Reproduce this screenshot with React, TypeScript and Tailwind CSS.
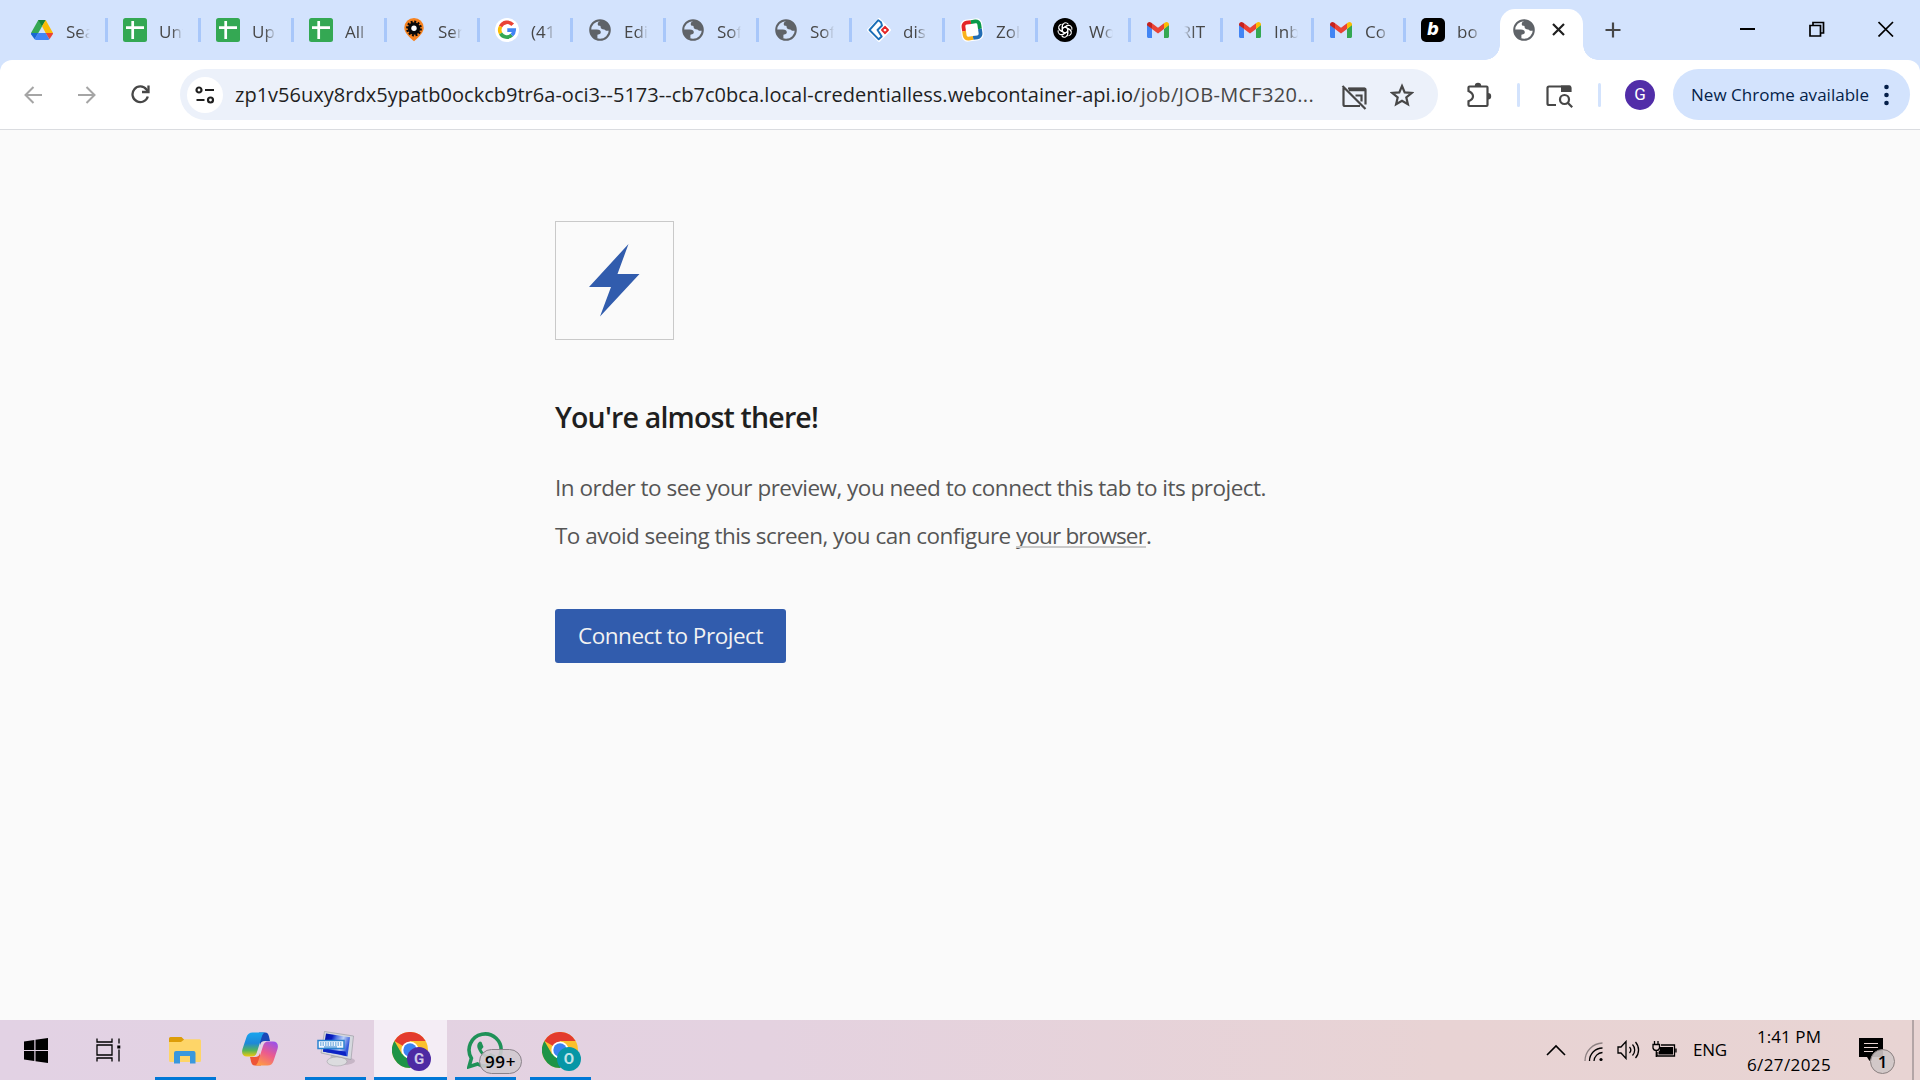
import React, { useLayoutEffect, useRef, useState } from "react";

/* Spreads a single line of text over a given width by adjusting its tracking. */
function Fit({ w, className = "", children }: { w: number; className?: string; children: React.ReactNode }) {
  const ref = useRef<HTMLSpanElement>(null);
  const [sp, setSp] = useState(0);
  useLayoutEffect(() => {
    const el = ref.current;
    if (!el) return;
    el.style.letterSpacing = "0px";
    const n = (el.textContent || "").length;
    const v = (w - el.getBoundingClientRect().width) / Math.max(1, n);
    el.style.letterSpacing = v + "px";
    setSp(v);
  }, [w]);
  return (
    <span ref={ref} className={"inline-block whitespace-nowrap " + className} style={{ letterSpacing: sp }}>
      {children}
    </span>
  );
}

const Drive = () => (
  <svg width="24" height="24" viewBox="0 0 24 24">
    <path d="M8.3 2h7.4L8.3 15H1z" fill="#34a853" />
    <path d="M8.3 2h7.4l-3.7 6.3z" fill="#188038" />
    <path d="M15.7 2L23 15h-7.3L12 8.3z" fill="#fbbc04" />
    <path d="M8.3 15h7.5l3.7 6.2c-.4.5-.9.8-1.6.8H6.200c-.7 0-1.200-.3-1.600-.8z" fill="#4285f4" />
    <path d="M1 15h7.300l-3.700 6.200L1.200 16.500z" fill="#1967d2" />
    <path d="M15.700 15H23c0 .6-.1 1-.4 1.500l-3.100 4.700z" fill="#ea4335" />
  </svg>
);
const Sheet = () => (
  <svg width="24" height="24" viewBox="0 0 24 24">
    <rect width="24" height="24" rx="2.500" fill="#34a853" />
    <path d="M3 9.700h18M9.700 3v18" stroke="#fff" strokeWidth="2.700" />
  </svg>
);
const Pin = () => (
  <svg width="24" height="24" viewBox="0 0 24 24">
    <path d="M12 0a9.700 9.700 0 0 1 9.700 9.700c0 4.500-4 8.500-9.700 13.600C6.300 18.200 2.300 14.200 2.300 9.700A9.700 9.700 0 0 1 12 0z" fill="#f58220" />
    <circle cx="12" cy="10.500" r="6.200" fill="#0a0a0a" />
    <circle cx="12" cy="10.500" r="6.800" fill="none" stroke="#0a0a0a" strokeWidth="2.200" strokeDasharray="2 1.560" />
    <circle cx="12" cy="10.300" r="2.700" fill="#fff" />
  </svg>
);
const Google = () => (
  <svg width="24" height="24" viewBox="0 0 24 24">
    <circle cx="12" cy="12" r="12" fill="#fff" />
    <g fill="none" strokeWidth="3.600">
      <path d="M17.700 6.800A7.300 7.300 0 0 0 5.600 8.500" stroke="#ea4335" />
      <path d="M5.600 8.500a7.300 7.300 0 0 0 0 7" stroke="#fbbc05" />
      <path d="M5.600 15.500a7.300 7.300 0 0 0 11.200 1.700" stroke="#34a853" />
      <path d="M16.800 17.200a7.300 7.300 0 0 0 2.400-5.100H12.300" stroke="#4285f4" />
    </g>
  </svg>
);
const Globe = () => (
  <svg width="24" height="24" viewBox="0 0 24 24">
    <circle cx="12" cy="12" r="9.800" fill="none" stroke="#5f6368" strokeWidth="2" />
    <path d="M2.500 11.500h6.300c2.700 0 4 .9 4 2.800 0 1.500-1 2.100-2.800 2.100-.4 0-.6.3-.6.700V21C5 20 2.300 16.500 2.500 11.500zM14 2.600c-1.800.2-4.300 1.300-4.300 3.300 0 1.300.8 1.900 2.200 1.900.5 0 .7.400.7.900 0 2 1.300 2.700 3.500 2.700 1.100 0 1.400 1.400 2.700 1.400h2.800C22 7.500 19 3.500 14 2.600z" fill="#5f6368" />
  </svg>
);
const ZohoDesk = () => (
  <svg width="24" height="24" viewBox="0 0 24 24">
    <path d="M12 .5L23.500 12 12 23.500.5 12z" fill="#fff" stroke="#fff" strokeWidth="1.500" strokeLinejoin="round" />
    <path d="M14 4.200L11.300 2.200 2.500 12l9.200 9.300 3-2.800-4.200-6.500 4.500-4.500z" fill="none" stroke="#1b6fb8" strokeWidth="1.900" strokeLinejoin="round" />
    <path d="M18 8.800l3 3.200-3 3.200-3-3.200z" fill="none" stroke="#e42527" strokeWidth="1.900" strokeLinejoin="round" />
  </svg>
);
const Zoho = () => (
  <svg width="24" height="24" viewBox="0 0 24 24">
    <rect x="1" y="1" width="22" height="22" rx="6" fill="#fff" transform="rotate(-8 12 12)" />
    <g transform="rotate(-8 12 12)" fill="none" strokeWidth="3.800">
      <path d="M4 12V7.500A3.500 3.500 0 0 1 7.500 4H12" stroke="#e42527" />
      <path d="M12 4h4.500A3.500 3.500 0 0 1 20 7.500V12" stroke="#089949" />
      <path d="M20 12v4.500a3.500 3.500 0 0 1-3.500 3.500H12" stroke="#226db4" />
      <path d="M12 20H7.500A3.500 3.500 0 0 1 4 16.500V12" stroke="#f9b21d" />
    </g>
  </svg>
);
const Gpt = () => (
  <svg width="24" height="24" viewBox="0 0 24 24">
    <circle cx="12" cy="12" r="12" fill="#000" />
    <g fill="none" stroke="#fff" strokeWidth="1.100">
      {[0, 60, 120, 180, 240, 300].map((a) => (
        <path key={a} transform={`rotate(${a} 12 12)`} d="M9.300 13.400V8.200a3.300 3.300 0 0 1 5.900-2.100M9.300 10.400l4.500-2.600a3.300 3.300 0 0 1 2.600-.3" />
      ))}
    </g>
  </svg>
);
const Gmail = () => (
  <svg width="24" height="24" viewBox="0 0 24 24">
    <path d="M1 6v12.500c0 .8.700 1.500 1.500 1.500H6v-9z" fill="#4285f4" />
    <path d="M23 6v12.500c0 .8-.7 1.500-1.500 1.500H18v-9z" fill="#34a853" />
    <path d="M6 11V5.200l6 4.500 6-4.500V11l-6 4.500z" fill="#ea4335" />
    <path d="M1 6.500C1 4 3.500 3.300 5 4.400l1 .8V11L1 7.300z" fill="#c5221f" />
    <path d="M23 6.500c0-2.500-2.500-3.200-4-2.100l-1 .8V11l5-3.700z" fill="#fbbc04" />
  </svg>
);
const Bolt = () => (
  <span className="flex size-6 items-center justify-center rounded-[5px] bg-black pb-0.5 font-['Inter'] text-[18px] leading-none font-extrabold text-white italic">
    b
  </span>
);

const tabs: { icon: React.ReactNode; t: string; w: string; left?: boolean }[] = [
  { icon: <Drive />, t: "Sea", w: "w-[93px]" },
  { icon: <Sheet />, t: "Unt", w: "w-[93px]" },
  { icon: <Sheet />, t: "Up", w: "w-[93px]" },
  { icon: <Sheet />, t: "All", w: "w-[93px]" },
  { icon: <Pin />, t: "Ser", w: "w-[93px]" },
  { icon: <Google />, t: "(41", w: "w-[93px]" },
  { icon: <Globe />, t: "Edit", w: "w-[93px]" },
  { icon: <Globe />, t: "Sof", w: "w-[93px]" },
  { icon: <Globe />, t: "Sof", w: "w-[93px]" },
  { icon: <ZohoDesk />, t: "dis", w: "w-[93px]" },
  { icon: <Zoho />, t: "Zoh", w: "w-[93px]" },
  { icon: <Gpt />, t: "Wo", w: "w-[93px]" },
  { icon: <Gmail />, t: "RIT", w: "w-[92px]", left: true },
  { icon: <Gmail />, t: "Inb", w: "w-[91px]" },
  { icon: <Gmail />, t: "Co", w: "w-[92px]" },
  { icon: <Bolt />, t: "bo", w: "w-[94px]" },
];

function TabStrip() {
  return (
    <div className="flex h-[60px] items-start bg-[#d3e3fd] pl-[15px]">
      {tabs.map((x, i) => (
        <div key={i} className={"mt-[18px] flex h-6 shrink-0 items-center pl-[15px] " + x.w}>
          <div className="size-6 shrink-0">{x.icon}</div>
          <div
            className={
              "flex h-7 items-center overflow-hidden pt-1 whitespace-nowrap text-[#474747] " +
              (x.left
                ? "ml-[14px] w-[21px] justify-end text-[17px] [mask-image:linear-gradient(to_left,black_50%,transparent)]"
                : "ml-3 w-6 text-[17px] [mask-image:linear-gradient(to_right,black_55%,transparent)]")
            }
          >
            {x.t}
          </div>
          {i < 15 && <div className="ml-auto h-6 w-[3px] bg-[#a8c7fa]" />}
        </div>
      ))}
      <div className="relative mt-[9px] flex h-[51px] w-[83px] shrink-0 items-start rounded-t-[15px] bg-white pt-[9px] pl-3">
        <Globe />
        <svg className="mt-1 ml-[15px]" width="16" height="16" viewBox="0 0 16 16">
          <path d="M2 2l11 11M13 2L2 13" stroke="#1f1f1f" strokeWidth="2.200" />
        </svg>
        <div className="absolute bottom-0 -left-[15px] size-[15px] bg-[radial-gradient(circle_at_0_0,transparent_14.500px,white_15px)]" />
        <div className="absolute -right-[15px] bottom-0 size-[15px] bg-[radial-gradient(circle_at_100%_0,transparent_14.500px,white_15px)]" />
      </div>
      <svg className="mt-[22px] ml-[22px]" width="16" height="16" viewBox="0 0 16 16">
        <path d="M8 .500v15M.500 8h15" stroke="#474747" strokeWidth="2.200" />
      </svg>
      <div className="mt-[21px] mr-[26px] ml-auto flex items-center gap-[53px]">
        <svg width="16" height="16" viewBox="0 0 16 16"><path d="M0 8h15" stroke="#000" strokeWidth="2" /></svg>
        <svg width="16" height="16" viewBox="0 0 16 16">
          <path d="M1 4.500h10.500V15H1zM4 4.500V1.500h10.500V12h-3" fill="none" stroke="#000" strokeWidth="1.700" />
        </svg>
        <svg width="16" height="16" viewBox="0 0 16 16"><path d="M.500 1l14.500 14.500M15 1L.500 15.500" stroke="#000" strokeWidth="1.700" /></svg>
      </div>
    </div>
  );
}

function Toolbar() {
  return (
    <div className="bg-[#d3e3fd]">
      <div className="flex h-[70px] items-start rounded-t-[12px] border-b border-[#dadce0] bg-white pt-[9px] text-[#474747]">
        <div className="flex h-[51px] w-[180px] shrink-0 items-center pl-[24px]">
          <svg width="18" height="18" viewBox="0 0 18 18"><path d="M18 9H2M9.500 1L1.500 9l8 8" fill="none" stroke="#a5a5a5" strokeWidth="2" /></svg>
          <svg className="ml-9" width="18" height="18" viewBox="0 0 18 18"><path d="M0 9h16M8.500 1l8 8-8 8" fill="none" stroke="#a5a5a5" strokeWidth="2" /></svg>
          <svg className="ml-[35px]" width="19" height="19" viewBox="0 0 19 19">
            <path d="M16.800 11.500A7.800 7.800 0 1 1 15.500 4.500L17 6.500" fill="none" stroke="#474747" strokeWidth="2.300" />
            <path d="M17.500.500v6.500h-6.500" fill="none" stroke="#474747" strokeWidth="2.300" />
          </svg>
        </div>
        <div className="flex h-[51px] w-[1258px] shrink-0 items-center rounded-full bg-[#ecf1fa] pl-[7px]">
          <div className="flex size-9 shrink-0 items-center justify-center rounded-full bg-white">
            <svg width="20" height="18" viewBox="0 0 20 18" fill="none" stroke="#1f1f1f" strokeWidth="2.200">
              <circle cx="4" cy="4" r="2.500" /><path d="M10 4h9M1.500 14h8" /><circle cx="15.500" cy="14" r="2.500" />
            </svg>
          </div>
          <div className="ml-3 flex h-full w-[1106px] shrink-0 items-center text-[20px] text-[#1f1f1f]">
            <Fit w={898}>zp1v56uxy8rdx5ypatb0ockcb9tr6a-oci3--5173--cb7c0bca.local-credentialless.webcontainer-api.io</Fit>
            <Fit w={181} className="text-[#474747]">/job/JOB-MCF320...</Fit>
          </div>
          <svg width="26" height="26" viewBox="0 0 26 26" className="mt-1 shrink-0" fill="none" stroke="#474747" strokeWidth="2.200">
            <path d="M2.500 4v16.500a1.500 1.500 0 0 0 1.500 1.500h15M7 4.500h16.500a1 1 0 0 1 1 1V20.500M1.500 2L24.500 25M14.500 11.500h6v6" />
            <path d="M8 5.500h16" strokeWidth="3.500" />
          </svg>
          <svg width="24" height="24" viewBox="0 0 24 24" className="ml-[23px] shrink-0" fill="none" stroke="#474747" strokeWidth="2.200">
            <path d="M12 3l2.700 6.400 6.900.6-5.300 4.500 1.600 6.800L12 17.700l-5.900 3.600 1.600-6.800L2.400 10l6.900-.6z" />
          </svg>
        </div>
        <div className="flex h-[51px] flex-1 items-center">
          <svg className="ml-[28px]" width="26" height="26" viewBox="0 0 26 26">
            <path d="M2.500 9V5.500a1 1 0 0 1 1-1H20.500a1 1 0 0 1 1 1V23a1 1 0 0 1-1 1H3.500a1 1 0 0 1-1-1V19.300q4.500-2 4.500-5.100T2.500 9z" fill="none" stroke="#474747" strokeWidth="2.200" />
            <path d="M8.800 4a3.200 3.200 0 0 1 6.400 0zM22 11a3.200 3.200 0 0 1 0 6.400z" fill="#474747" />
          </svg>
          <div className="ml-[25px] h-6 w-[3px] rounded bg-[#d3e3fd]" />
          <svg className="ml-[25px]" width="28" height="26" viewBox="0 0 28 26" fill="none" stroke="#474747" strokeWidth="2.200">
            <path d="M11 23H4a1.500 1.500 0 0 1-1.500-1.500V6A1.500 1.500 0 0 1 4 4.500h20A1.500 1.500 0 0 1 25.500 6v4" />
            <path d="M16 3.500h9.500V10H16z" fill="#474747" stroke="none" />
            <circle cx="19.500" cy="17.500" r="4.500" /><path d="M22.700 20.700l4.500 4.500" />
          </svg>
          <div className="ml-[25px] h-6 w-[3px] rounded bg-[#d3e3fd]" />
          <div className="ml-6 flex size-[30px] items-center justify-center rounded-full bg-[#512da8] font-['Roboto'] text-[17px] text-white">G</div>
          <div className="ml-[18px] flex h-[51px] w-[237px] items-center rounded-full bg-[#d3e3fd] pl-[18px] text-[17px] text-[#041e49]">
            <Fit w={178}>New Chrome available</Fit>
            <svg className="ml-[15px]" width="5" height="22" viewBox="0 0 5 22" fill="#041e49">
              <circle cx="2.500" cy="3" r="2.300" /><circle cx="2.500" cy="11" r="2.300" /><circle cx="2.500" cy="19" r="2.300" />
            </svg>
          </div>
        </div>
      </div>
    </div>
  );
}

function Page() {
  return (
    <div className="flex h-[890px] flex-col items-start bg-[#fafafa] pt-[91px] pl-[555px] text-[#555]">
      <div className="flex size-[119px] items-center justify-center border border-[#c9c9c9] pb-px">
        <svg width="51" height="73" viewBox="0 0 51 73"><path d="M39.500 0L28.500 30H50.500L11 72.500 22 43H0z" fill="#315cad" /></svg>
      </div>
      <h1 className="mt-[57px] text-[28.500px] leading-[40px] font-semibold text-[#1f1f1f]"><Fit w={263}>You're almost there!</Fit></h1>
      <p className="mt-[27px] text-[22.500px] leading-[48px]"><Fit w={711}>In order to see your preview, you need to connect this tab to its project.</Fit></p>
      <p className="flex text-[22.500px] leading-[48px]">
        <Fit w={461}>To avoid seeing this screen, you can configure&nbsp;</Fit>
        <span className="relative">
          <Fit w={130}>your browser</Fit>
          <span className="absolute bottom-[12px] left-0 h-[2px] w-full bg-[#c9c9c9]" />
        </span>
        .
      </p>
      <button className="mt-[49px] flex h-[54px] w-[231px] items-center justify-center rounded-[3px] bg-[#315cad] text-[22.500px] text-[#f2f2f2]">
        <Fit w={185}>Connect to Project</Fit>
      </button>
    </div>
  );
}

const Chrome = ({ letter, color }: { letter: string; color: string }) => (
  <div className="relative size-[39px]">
    <svg width="36" height="36" viewBox="0 0 36 36">
      <circle cx="18" cy="18" r="18" fill="#fbc02d" />
      <path d="M18 18L2.400 9A18 18 0 0 1 33.600 9H18z" fill="#e33b2e" />
      <path d="M2.400 9A18 18 0 0 0 18 36l7.800-13.500L18 18 10.200 22.500z" fill="#1e9447" />
      <circle cx="18" cy="18" r="8.600" fill="#fff" />
      <circle cx="18" cy="18" r="6.700" fill="#3b82f0" />
    </svg>
    <span className={"absolute top-[15px] left-[15px] flex size-6 items-center justify-center rounded-full font-['Roboto'] text-[15px] font-bold text-white/75 " + color}>
      {letter}
    </span>
  </div>
);

function Taskbar() {
  return (
    <div className="flex h-[60px] items-stretch bg-[linear-gradient(to_right,#e2d2e4,#e4d2e0_40%,#e8d3d4_75%,#e8d4d3)]">
      <div className="flex w-[72px] items-center justify-center">
        <svg width="24" height="25" viewBox="0 0 24 25"><path d="M0 3.600L10.300 2v10H0zM11.500 1.800L24 0v12H11.500zM0 13h10.300v10L0 21.500zM11.500 13H24v12l-12.500-1.800z" /></svg>
      </div>
      <div className="flex w-[72px] items-center justify-center">
        <svg className="-mt-px" width="25" height="24" viewBox="0 0 25 24" fill="none" stroke="#000" strokeWidth="1.300">
          <path d="M1 .500V4h15V.500M1 7h15v10H1zM1 23.500V20h15v3.500M23 .500v5M23 11.500v12" /><path d="M21.300 7.500h3v3h-3z" fill="#000" stroke="none" />
        </svg>
      </div>
      <div className="ml-[11px] flex w-[61px] flex-col items-start border-b-[3px] border-[#0078d7] pt-[17px] pl-[14px]">
        <svg width="32" height="27" viewBox="0 0 32 27">
          <path d="M0 1.500A1.500 1.500 0 0 1 1.500 0h11L15 2.500V6H0z" fill="#dd9d09" />
          <path d="M0 5h12l3.500-2.700H30.500A1.500 1.500 0 0 1 32 3.800v19.700a1.500 1.500 0 0 1-1.500 1.500h-29A1.500 1.500 0 0 1 0 23.500z" fill="#fed568" />
          <path d="M5 16a2 2 0 0 1 2-2h17.500a2 2 0 0 1 2 2v10.500H21V19H11v7.500H5z" fill="#3a98dd" />
        </svg>
      </div>
      <div className="flex w-[89px] items-center justify-center pr-px">
        <svg className="-mt-0.5" width="36" height="34" viewBox="0 0 36 34">
          <defs>
            <linearGradient id="cpa" x1="0" y1="0" x2="0" y2="1"><stop offset="0" stopColor="#18a5ee" /><stop offset=".45" stopColor="#1e88d8" /><stop offset=".75" stopColor="#57b557" /><stop offset="1" stopColor="#f2c80c" /></linearGradient>
            <linearGradient id="cpb" x1=".8" y1="0" x2=".3" y2="1"><stop offset="0" stopColor="#9b51e8" /><stop offset=".5" stopColor="#ec5b8d" /><stop offset="1" stopColor="#ff9a45" /></linearGradient>
          </defs>
          <path d="M17 .500h6c2.500 0 3.300 1.500 4 4L28 9h-5c-3 0-4.300 1.500-5 4z" fill="#1848b8" />
          <path d="M19 33.500h-6c-2.500 0-3.300-1.500-4-4L8 25h5c3 0 4.300-1.500 5-4z" fill="#ee5536" />
          <path d="M10.500.500H24c-2.500 0-3.500 2-4.300 4.500L15 20c-1 3-2.300 4.500-5 4.500H5c-4 0-5.800-3-4.500-7.500l4-12C5.500 2 7.500.500 10.500.500z" fill="url(#cpa)" />
          <path d="M25.500 33.500H12c2.500 0 3.500-2 4.300-4.500L21 14c1-3 2.300-4.500 5-4.500h5c4 0 5.800 3 4.500 7.500l-4 12c-1 3-3 4.500-6 4.500z" fill="url(#cpb)" />
        </svg>
      </div>
      <div className="flex w-[61px] flex-col items-center border-b-[3px] border-[#0078d7] pt-[11px]">
        <svg width="38" height="37" viewBox="0 0 38 37">
          <defs><linearGradient id="scr" x1="0" y1="0" x2="1" y2=".3"><stop offset="0" stopColor="#0410a0" /><stop offset=".35" stopColor="#0a1ec0" /><stop offset=".5" stopColor="#4f74e4" /><stop offset=".75" stopColor="#bcd0f6" /><stop offset="1" stopColor="#3358dc" /></linearGradient></defs>
          <ellipse cx="26" cy="30" rx="12" ry="4" fill="#a99aaa" opacity=".5" />
          <path d="M14 24h9l2 5H13z" fill="#b9bbc0" /><ellipse cx="20" cy="30.500" rx="10" ry="4.500" fill="#dcdcdf" stroke="#a5a5aa" strokeWidth=".6" />
          <path d="M7.500.500L36.500 5 34 28.500 4 22z" fill="#d5d8de" stroke="#94969c" strokeWidth=".6" />
          <path d="M9 2.500L33 6.300 30.500 25.500 6 20.500z" fill="url(#scr)" />
          <path d="M6.500 18l22 2.500 1 4.500L6 20.500z" fill="#0b22c4" />
          <rect x="1" y="9.500" width="26" height="8" fill="#f2f8fe" stroke="#2d83cf" strokeWidth="1.500" />
          <path d="M3 12h22M3 14h22" stroke="#2d83cf" strokeWidth="1" strokeDasharray="1.500 1" /><path d="M7 16h13" stroke="#2d83cf" />
        </svg>
      </div>
      <div className="ml-2 flex w-[73px] flex-col border-b-[3px] border-[#0078d7] bg-[#f4edf5] pt-3 pl-[18px]"><Chrome letter="G" color="bg-[#4d2aa3]" /></div>
      <div className="relative ml-2 flex w-[61px] flex-col border-b-[3px] border-[#0078d7] pt-3 pl-3">
        <svg width="37" height="37" viewBox="0 0 37 37">
          <path d="M2 34.700l2.400-8.500A16 16 0 1 1 10.500 32z" fill="none" stroke="#1f9158" strokeWidth="3.600" />
          <path d="M13 9.500c-2.500 1.500-3.500 4-2 7.500 2 5 6 9 11.500 10.500 3 .8 5.500-1 6-4l-5-2.500-2.500 2.500c-3-1-5-3-6.500-6l2-2.500-2-5z" fill="#1f9158" />
        </svg>
        <span className="absolute top-[29px] left-6 flex h-[25px] w-[43px] items-center justify-center rounded-full border border-[#8a828a] bg-[#d0cad0]/90 text-[17px] font-semibold text-black"><Fit w={31}>99+</Fit></span>
      </div>
      <div className="ml-[14px] flex w-[61px] flex-col border-b-[3px] border-[#0078d7] pt-3 pl-3"><Chrome letter="O" color="bg-[#0696a6]" /></div>

      <div className="ml-auto flex items-center text-[17px] text-black">
        <svg width="20" height="12" viewBox="0 0 20 12"><path d="M1 11l9-9 9 9" fill="none" stroke="#000" strokeWidth="1.600" /></svg>
        <svg className="mt-[3px] ml-[18px]" width="20" height="20" viewBox="0 0 20 20" fill="none" stroke="#000" strokeWidth="1.300">
          <path d="M1 19A18 18 0 0 1 18.500 1" stroke="#8d8182" /><path d="M5.500 19A13 13 0 0 1 18.500 6M10 19a9 9 0 0 1 8.500-8.500" /><circle cx="17" cy="17.500" r="1.600" fill="#000" stroke="none" />
        </svg>
        <svg className="ml-[13px]" width="24" height="20" viewBox="0 0 24 20" fill="none" stroke="#000" strokeWidth="1.300">
          <path d="M1 7h3l5-5.500v17L4 13H1zM12.500 7a4.500 4.500 0 0 1 0 6M15.500 4.500a8 8 0 0 1 0 11M18.500 2a12 12 0 0 1 0 16" />
        </svg>
        <svg className="-mt-[2px] ml-[11px]" width="25" height="17" viewBox="0 0 25 17">
          <path d="M9 4h13.500v11H5V11M24 7.500v4" fill="none" stroke="#000" strokeWidth="1.300" /><path d="M8 6h13v7.500H6.500V11L8 9z" />
          <path d="M2.500 0v3.500M6 0v3.500M1 3.500h6.500V7q-.5 2.500-3.200 2.500T1 7zM4.300 9.500V16" fill="none" stroke="#000" strokeWidth="1.300" />
        </svg>
        <div className="ml-4 w-[34px]"><Fit w={34}>ENG</Fit></div>
        <div className="ml-5 flex w-[84px] flex-col items-center pt-px leading-[28px]">
          <Fit w={64}>1:41 PM</Fit><Fit w={84}>6/27/2025</Fit>
        </div>
        <div className="relative mt-3 ml-7 h-9 w-9">
          <svg width="24" height="24" viewBox="0 0 24 24"><path d="M0 0h24v19H13.500L10.500 23 8 19H0z" /><path d="M5 5.500h14M5 9.500h14M5 13.500h9" stroke="#e8d4d3" strokeWidth="1.200" /></svg>
          <span className="absolute top-[11px] left-[11px] flex size-[25px] items-center justify-center rounded-full border border-[#8a8080] bg-[#cfc6c6]/90 text-[17px] font-semibold">1</span>
        </div>
        <div className="ml-[17px] h-[60px] w-[2px] bg-[#b3a5a6]" />
        <div className="w-[6px]" />
      </div>
    </div>
  );
}

export default function App() {
  return (
    <div className="h-[1080px] w-[1920px] overflow-hidden font-['Open_Sans',sans-serif]">
      <TabStrip />
      <Toolbar />
      <Page />
      <Taskbar />
    </div>
  );
}
